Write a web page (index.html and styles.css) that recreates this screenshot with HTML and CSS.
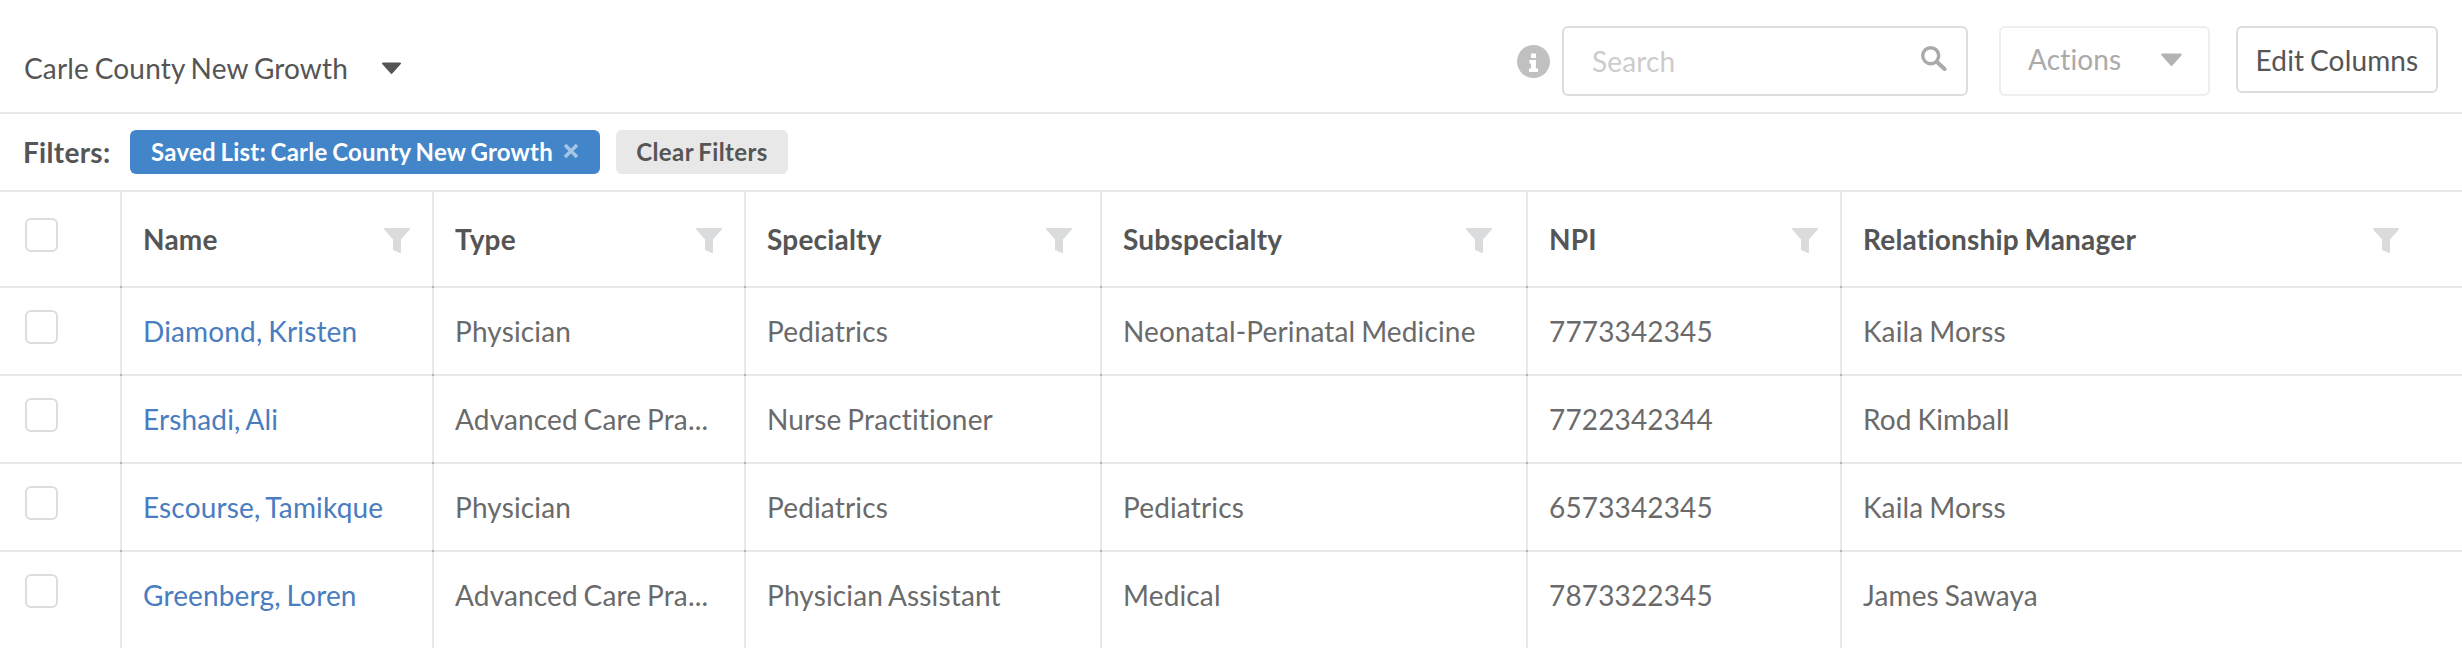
FILE: index.html
```html
<!DOCTYPE html>
<html lang="en">
<head>
<meta charset="utf-8">
<title>Carle County New Growth</title>
<link rel="stylesheet" href="styles.css">
</head>
<body>
<div class="toolbar">
  <div class="list-title">Carle County New Growth</div>
  <svg class="caret title-caret" viewBox="0 0 19 12"><path d="M1 0.5h17a1 1 0 0 1 .8 1.600l-8.500 9.400a1 1 0 0 1-1.600 0L.2 2.100A1 1 0 0 1 1 .5z"/></svg>
  <svg class="info" viewBox="0 0 33 33"><circle cx="16.500" cy="16.500" r="16.500"/><path class="info-i" d="M14 8.500h5v4.500h-5zM12.500 15h6.500v8.500h2v3.500h-9v-3.500h2v-5h-1.500z"/></svg>
  <div class="search">
    <span class="placeholder">Search</span>
    <svg class="search-icon" viewBox="0 0 26 25"><circle cx="9.700" cy="9.700" r="8"/><path d="M16 16l7.500 7"/></svg>
  </div>
  <div class="btn btn-disabled"><span>Actions</span><svg class="caret actions-caret" viewBox="0 0 19 12"><path d="M1 0.5h17a1 1 0 0 1 .8 1.600l-8.500 9.400a1 1 0 0 1-1.600 0L.2 2.100A1 1 0 0 1 1 .5z"/></svg></div>
  <div class="btn btn-edit">Edit Columns</div>
</div>
<div class="filters">
  <span class="filters-label">Filters:</span>
  <span class="chip chip-blue">Saved List: Carle County New Growth<svg class="chip-x" viewBox="0 0 16 16"><path d="M2 2l12 12M14 2L2 14"/></svg></span>
  <span class="chip chip-grey">Clear Filters</span>
</div>
<div class="table">
  <div class="row head">
    <div class="cell check"><span class="box"></span></div>
    <div class="cell"><span class="label">Name</span><svg class="funnel" viewBox="0 0 26 25"><path d="M1 0h24a1 1 0 0 1 .8 1.600L17 11.500V25l-1 0-7-3V11.500L.2 1.600A1 1 0 0 1 1 0z"/></svg></div>
    <div class="cell"><span class="label">Type</span><svg class="funnel" viewBox="0 0 26 25"><path d="M1 0h24a1 1 0 0 1 .8 1.600L17 11.500V25l-1 0-7-3V11.500L.2 1.600A1 1 0 0 1 1 0z"/></svg></div>
    <div class="cell"><span class="label">Specialty</span><svg class="funnel funnel-specialty" viewBox="0 0 26 25"><path d="M1 0h24a1 1 0 0 1 .8 1.600L17 11.500V25l-1 0-7-3V11.500L.2 1.600A1 1 0 0 1 1 0z"/></svg></div>
    <div class="cell"><span class="label">Subspecialty</span><svg class="funnel funnel-subspecialty" viewBox="0 0 26 25"><path d="M1 0h24a1 1 0 0 1 .8 1.600L17 11.500V25l-1 0-7-3V11.500L.2 1.600A1 1 0 0 1 1 0z"/></svg></div>
    <div class="cell"><span class="label">NPI</span><svg class="funnel" viewBox="0 0 26 25"><path d="M1 0h24a1 1 0 0 1 .8 1.600L17 11.500V25l-1 0-7-3V11.500L.2 1.600A1 1 0 0 1 1 0z"/></svg></div>
    <div class="cell last"><span class="label">Relationship Manager</span><svg class="funnel" viewBox="0 0 26 25"><path d="M1 0h24a1 1 0 0 1 .8 1.600L17 11.500V25l-1 0-7-3V11.500L.2 1.600A1 1 0 0 1 1 0z"/></svg></div>
  </div>
  <div class="row">
    <div class="cell check"><span class="box"></span></div>
    <div class="cell"><a class="name">Diamond, Kristen</a></div>
    <div class="cell"><span class="text">Physician</span></div>
    <div class="cell"><span class="text">Pediatrics</span></div>
    <div class="cell"><span class="text">Neonatal-Perinatal Medicine</span></div>
    <div class="cell"><span class="text">7773342345</span></div>
    <div class="cell last"><span class="text">Kaila Morss</span></div>
  </div>
  <div class="row">
    <div class="cell check"><span class="box"></span></div>
    <div class="cell"><a class="name">Ershadi, Ali</a></div>
    <div class="cell"><span class="text">Advanced Care Pra...</span></div>
    <div class="cell"><span class="text">Nurse Practitioner</span></div>
    <div class="cell"><span class="text"></span></div>
    <div class="cell"><span class="text">7722342344</span></div>
    <div class="cell last"><span class="text">Rod Kimball</span></div>
  </div>
  <div class="row">
    <div class="cell check"><span class="box"></span></div>
    <div class="cell"><a class="name">Escourse, Tamikque</a></div>
    <div class="cell"><span class="text">Physician</span></div>
    <div class="cell"><span class="text">Pediatrics</span></div>
    <div class="cell"><span class="text">Pediatrics</span></div>
    <div class="cell"><span class="text">6573342345</span></div>
    <div class="cell last"><span class="text">Kaila Morss</span></div>
  </div>
  <div class="row row-end">
    <div class="cell check"><span class="box"></span></div>
    <div class="cell"><a class="name">Greenberg, Loren</a></div>
    <div class="cell"><span class="text">Advanced Care Pra...</span></div>
    <div class="cell"><span class="text">Physician Assistant</span></div>
    <div class="cell"><span class="text">Medical</span></div>
    <div class="cell"><span class="text">7873322345</span></div>
    <div class="cell last"><span class="text">James Sawaya</span></div>
  </div>
</div>
</body>
</html>
```
FILE: styles.css
```css
* { box-sizing: border-box; }
html, body { margin: 0; padding: 0; background: #fff; }
body {
  width: 2462px;
  height: 648px;
  overflow: hidden;
  font-family: Lato, "Liberation Sans", sans-serif;
  font-size: 28px;
  letter-spacing: 0.15px;
  word-spacing: -1.5px;
  color: #666;
}
.toolbar {
  height: 114px;
  display: flex;
  align-items: flex-start;
  padding: 26px 24px 0;
  border-bottom: 2px solid #e8e8e8;
}
.list-title { margin-top: 26px; line-height: 32px; color: #555; }
.caret { display: block; }
.title-caret { width: 19px; height: 12px; margin: 36px auto 0 34px; fill: #555; }
.info { width: 33px; height: 33px; margin: 19px 12px 0 0; fill: #c0c0c0; }
.info-i { fill: #fff; }
.search {
  width: 406px;
  height: 70px;
  border: 2px solid #ddd;
  border-radius: 6px;
  display: flex;
  align-items: center;
  justify-content: space-between;
  padding: 0 19px 0 28px;
  margin-right: 31px;
}
.placeholder { color: #ccc; }
.search-icon { width: 26px; height: 25px; margin-bottom: 6px; fill: none; stroke: #aaa; stroke-width: 3.400; }
.search-icon path { stroke-width: 4; stroke-linecap: round; }
.btn {
  border-radius: 6px;
  display: flex;
  align-items: center;
}
.btn-disabled {
  width: 211px;
  height: 70px;
  border: 2px solid #eee;
  padding: 0 0 4px 27px;
  color: #aaa;
  margin-right: 26px;
}
.actions-caret { width: 21px; height: 13px; margin-left: 40px; fill: #b3b3b3; }
.btn-edit {
  width: 202px;
  height: 67px;
  border: 2px solid #ddd;
  justify-content: center;
  color: #555;
}
.filters {
  height: 78px;
  display: flex;
  align-items: center;
  padding: 0 24px 0 23px;
  border-bottom: 2px solid #e8e8e8;
}
.filters-label { font-weight: 700; color: #555; width: 107px; letter-spacing: 0.3px; }
.chip {
  height: 44px;
  padding-bottom: 2px;
  border-radius: 6px;
  display: flex;
  align-items: center;
  font-size: 24px;
  font-weight: 700;
  letter-spacing: 0.25px;
}
.chip-blue {
  width: 470px;
  padding-left: 21px;
  background: #4285c9;
  color: #fff;
  margin-right: 16px;
}
.chip-x { width: 16px; height: 16px; margin-left: auto; margin-right: 21px; fill: none; stroke: #a6c6e6; stroke-width: 3.500; }
.chip-grey {
  width: 172px;
  justify-content: center;
  background: #e8e8e8;
  color: #555;
  letter-spacing: 0.4px;
}
.row {
  display: grid;
  grid-template-columns: 122px 312px 312px 356px 426px 314px 1fr;
  height: 88px;
  border-bottom: 2px solid #e8e8e8;
}
.row.head { height: 96px; }
.row.row-end { height: 96px; border-bottom: 0; }
.row-end .cell { padding-bottom: 10px; }
.cell {
  display: flex;
  align-items: center;
  min-width: 0;
  padding: 0 22px 0 21px;
  border-right: 2px solid #e8e8e8;
  position: relative;
}
.cell::after {
  content: "";
  position: absolute;
  right: -2px;
  bottom: -2px;
  width: 2px;
  height: 2px;
  background: #b4b4b4;
}
.cell.last::after, .row-end .cell::after { display: none; }
.cell.check { padding: 0; align-items: flex-start; }
.cell.last { border-right: 0; }
.box {
  width: 33px;
  height: 34px;
  margin: 22px 0 0 25px;
  border: 2px solid #ddd;
  border-radius: 6px;
  display: block;
}
.head .box { margin-top: 26px; }
.label { font-weight: 700; color: #555; letter-spacing: 0.2px; }
.funnel {
  width: 26px;
  height: 25px;
  fill: #d9dbdd;
  margin-left: auto;
  margin-top: 2px;
}
.funnel-specialty { margin-right: 6px; }
.funnel-subspecialty { margin-right: 12px; }
.last .funnel { margin-right: 41px; }
.name { color: #4a7cc0; white-space: nowrap; }
.text { color: #6a6a6a; white-space: nowrap; }
```
